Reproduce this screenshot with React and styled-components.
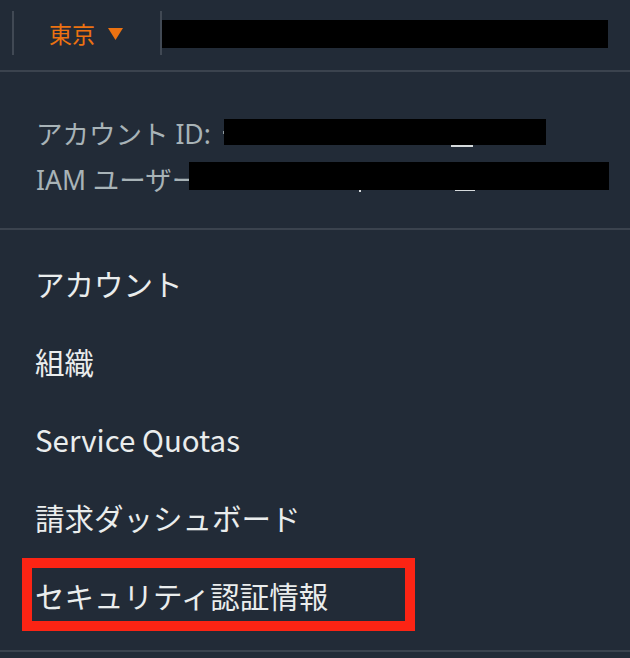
import React from 'react';
import styled, { createGlobalStyle } from 'styled-components';

const GlobalStyle = createGlobalStyle`
  html, body {
    margin: 0;
    padding: 0;
    background: #222b37;
  }
  body {
    font-family: "Noto Sans CJK JP", "Noto Sans", sans-serif;
  }
`;

const Panel = styled.div`
  width: 630px;
  height: 658px;
  background: #222b37;
  overflow: hidden;
`;

const TopBar = styled.header`
  height: 72px;
  box-sizing: border-box;
  padding: 0 0 4px 12px;
  display: flex;
  align-items: center;
  border-bottom: 2px solid #3b434e;
`;

const Divider = styled.span`
  flex: none;
  width: 2px;
  height: 44px;
  background: #414954;
`;

const RegionButton = styled.button`
  all: unset;
  box-sizing: border-box;
  width: 146px;
  padding-left: 35px;
  display: flex;
  align-items: center;
  gap: 13px;
  color: #ec7211;
  font-size: 23px;
  line-height: 1;
  cursor: pointer;
`;

const Caret = styled.svg`
  flex: none;
  width: 15px;
  height: 12px;
  margin-top: 1px;
`;

const Mask = styled.span`
  position: relative;
  flex: none;
  display: block;
  width: ${p => p.$w}px;
  height: ${p => p.$h}px;
  margin-top: ${p => p.$mt || 0}px;
  background: #000;
`;

const Peek = styled.span`
  position: absolute;
  top: ${p => (p.$side ? '45%' : '100%')};
  left: ${p => p.$x}px;
  width: ${p => p.$w}px;
  height: ${p => p.$h}px;
  background: ${p => (p.$side ? '#8e999e' : '#d5dadc')};
`;

const InfoBlock = styled.section`
  padding: 37px 0 27px 36px;
  border-bottom: 2px solid #3b434e;
`;

const InfoRow = styled.div`
  height: 46px;
  display: flex;
  align-items: center;
  color: #a8b3b7;
  font-family: "Noto Sans", "Noto Sans CJK JP", sans-serif;
  font-size: 26.5px;
  white-space: nowrap;
`;

const Label = styled.span`
  flex: none;
  width: ${p => p.$w}px;
  overflow: visible;
`;

const Menu = styled.nav`
  padding: 14px 0 16px;
  border-bottom: 2px solid #3b434e;
`;

const MenuItem = styled.a`
  position: relative;
  height: 78px;
  box-sizing: border-box;
  padding-left: 35px;
  display: flex;
  align-items: center;
  color: #eaeded;
  font-size: 29.5px;
  text-decoration: none;
  white-space: nowrap;

  ${p => p.$highlight && `
    &::after {
      content: "";
      position: absolute;
      left: 22px;
      top: 2px;
      width: 393px;
      height: 73px;
      box-sizing: border-box;
      border: 10px solid #fc2414;
    }
  `}
`;

const items = [
  'アカウント',
  '組織',
  'Service Quotas',
  '請求ダッシュボード',
  'セキュリティ認証情報',
];

export default function App() {
  return (
    <>
      <GlobalStyle />
      <Panel>
        <TopBar>
          <Divider />
          <RegionButton>
            東京
            <Caret viewBox="0 0 15 12">
              <polygon points="0,0 15,0 7.5,12" fill="#ec7211" />
            </Caret>
          </RegionButton>
          <Divider />
          <Mask $w={446} $h={28} $mt={2} />
        </TopBar>

        <InfoBlock>
          <InfoRow>
            <Label $w={188}>アカウント ID:</Label>
            <Mask $w={322} $h={26}>
              <Peek $side $x={-1} $w={1} $h={3} />
              <Peek $x={227} $w={22} $h={2} />
            </Mask>
          </InfoRow>
          <InfoRow>
            <Label $w={153}>IAM ユーザー</Label>
            <Mask $w={420} $h={28} $mt={-4}>
              <Peek $x={170} $w={2} $h={2} />
              <Peek $x={266} $w={20} $h={1} />
            </Mask>
          </InfoRow>
        </InfoBlock>

        <Menu>
          {items.map((t, i) => (
            <MenuItem key={t} href="#" $highlight={i === items.length - 1}>
              {t}
            </MenuItem>
          ))}
        </Menu>
      </Panel>
    </>
  );
}
